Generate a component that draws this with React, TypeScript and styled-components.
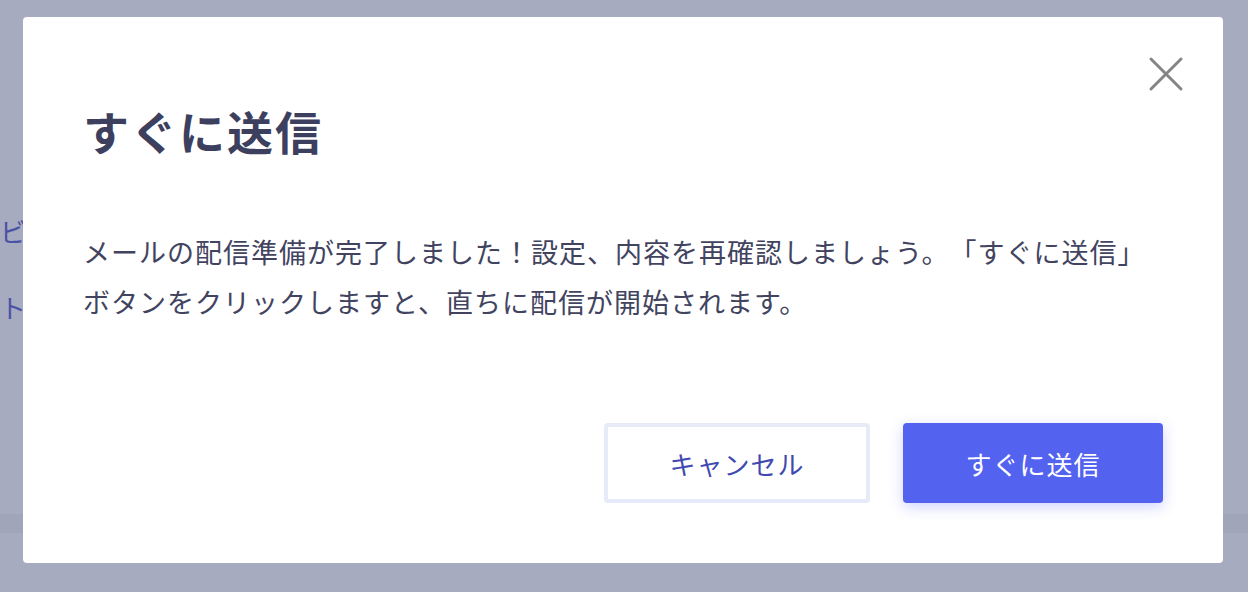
import styled, { createGlobalStyle } from "styled-components"

const GlobalStyle = createGlobalStyle`
  html, body {
    margin: 0;
    padding: 0;
    width: 100%;
    height: 100%;
    overflow: hidden;
  }
  body {
    font-family: "Noto Sans CJK JP", "Noto Sans", sans-serif;
    text-spacing-trim: space-all;
  }
`

const colors = {
  backdrop: "#a6abbf",
  band: "#a0a5b9",
  navText: "#4b52a6",
  title: "#3d3f5e",
  text: "#42445f",
  primary: "#5462f0",
  cancelBorder: "#e7eaf8",
  cancelText: "#4049b0",
  close: "#858585",
}

// page behind the modal, seen through the overlay
const Page = styled.div`
  position: relative;
  display: flex;
  flex-direction: column;
  width: 100vw;
  height: 100vh;
  background: ${colors.backdrop};
`

const Nav = styled.nav`
  display: flex;
  flex-direction: column;
  gap: 36px;
  padding-top: 211px;
`

const NavItem = styled.div`
  white-space: nowrap;
  font-size: 26px;
  line-height: 40px;
  color: ${colors.navText};
`

const Band = styled.div`
  margin-top: 187px;
  height: 19px;
  background: ${colors.band};
`

const Dialog = styled.div`
  position: absolute;
  top: 17px;
  left: 23px;
  box-sizing: border-box;
  display: flex;
  flex-direction: column;
  width: 1200px;
  height: 546px;
  padding: 80px 60px 60px;
  background: #fff;
  border-radius: 4px;
`

const CloseButton = styled.button`
  position: absolute;
  top: 39px;
  right: 39px;
  display: flex;
  padding: 0;
  border: none;
  background: none;
  cursor: pointer;
`

const Title = styled.h2`
  margin: 0;
  font-size: 46px;
  font-weight: 700;
  line-height: 66px;
  letter-spacing: 2px;
  color: ${colors.title};
`

const Message = styled.p`
  max-width: 1075px;
  margin: 64px 0 0;
  font-size: 27px;
  line-height: 50px;
  letter-spacing: 1px;
  color: ${colors.text};
`

const Actions = styled.div`
  display: flex;
  justify-content: flex-end;
  gap: 33px;
  margin-top: auto;
`

const Button = styled.button<{ $primary?: boolean }>`
  box-sizing: border-box;
  width: ${(p) => (p.$primary ? "260px" : "266px")};
  height: 80px;
  font-family: inherit;
  font-size: 26px;
  letter-spacing: 1px;
  border-radius: 4px;
  cursor: pointer;
  color: ${(p) => (p.$primary ? "#fff" : colors.cancelText)};
  background: ${(p) => (p.$primary ? colors.primary : "#fff")};
  border: ${(p) => (p.$primary ? "none" : `4px solid ${colors.cancelBorder}`)};
  box-shadow: ${(p) => (p.$primary ? "0 4px 14px rgba(84, 98, 240, 0.28)" : "none")};
`

const App = () => {
  return (
    <>
      <GlobalStyle />
      <Page>
        <Nav>
          <NavItem>ビ</NavItem>
          <NavItem>ト</NavItem>
        </Nav>
        <Band />
        <Dialog>
          <CloseButton aria-label="閉じる">
            <svg width="36" height="36" viewBox="0 0 36 36">
              <path
                d="M3 3 L33 33 M33 3 L3 33"
                stroke={colors.close}
                strokeWidth="3"
                strokeLinecap="round"
              />
            </svg>
          </CloseButton>
          <Title>すぐに送信</Title>
          <Message>
            メールの配信準備が完了しました！設定、内容を再確認しましょう。「すぐに送信」ボタンをクリックしますと、直ちに配信が開始されます。
          </Message>
          <Actions>
            <Button>キャンセル</Button>
            <Button $primary>すぐに送信</Button>
          </Actions>
        </Dialog>
      </Page>
    </>
  )
}

export default App
